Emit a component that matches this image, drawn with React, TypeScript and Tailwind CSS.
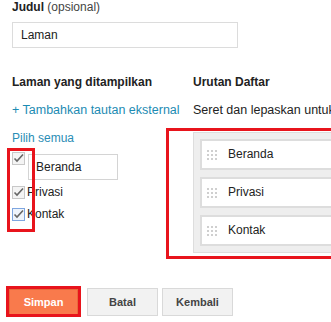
import React from "react";

function Check({ blue = false }: { blue?: boolean }) {
  return (
    <svg width="13" height="13" viewBox="0 0 13 13" className="shrink-0 block">
      <rect x="0.5" y="0.5" width="12" height="12" fill={blue ? "#eef4fc" : "#f4f4f4"} stroke={blue ? "#7ea6e0" : "#c8c8c8"} />
      <path d="M2.5 6.5 L5 9 L11 2.5" fill="none" stroke="#666" strokeWidth="1.6" />
    </svg>
  );
}

function Grip() {
  return (
    <svg width="12" height="12" viewBox="0 0 12 12" className="shrink-0 block">
      {[1, 5, 9].map((y) =>
        [1, 5, 9].map((x) => <rect key={`${x}-${y}`} x={x} y={y} width="2" height="2" fill="#cfcfcf" />)
      )}
    </svg>
  );
}

function Item({ label }: { label: string }) {
  return (
    <div className="h-[31px] border-2 border-[#dddddd] bg-white flex items-center pl-[4px]">
      <Grip />
      <span className="ml-[10px]">{label}</span>
    </div>
  );
}

export default function App() {
  return (
    <div
      className="relative w-[331px] h-[322px] overflow-hidden bg-white pl-[12px] text-[12px] leading-[15px] text-[#222]"
      style={{ fontFamily: '"Liberation Sans", Arial, sans-serif' }}
    >
      <div>
        <span className="font-bold">Judul</span> <span className="text-[#444]">(opsional)</span>
      </div>
      <div className="mt-[7px] w-[226px] h-[26px] border border-[#dcdcdc] flex items-center pl-[8px]">Laman</div>

      <div className="flex mt-[27px]">
        <div className="w-[181px] shrink-0">
          <div className="font-bold">Laman yang ditampilkan</div>
          <div className="mt-[13px] text-[12.5px] text-[#1c8bb3] whitespace-nowrap">+ Tambahkan tautan eksternal</div>
          <div className="mt-[13px] text-[#2a8db5]">Pilih semua</div>
          <div className="mt-[6px] flex items-start">
            <Check />
            <div className="ml-[3px] mt-[2px] w-[90px] h-[26px] border border-[#d4d4d4] flex items-center pl-[7px]">Beranda</div>
          </div>
          <div className="mt-[5px] h-[15px] flex items-center">
            <Check />
            <span className="ml-[2px]">Privasi</span>
          </div>
          <div className="mt-[7px] h-[15px] flex items-center">
            <Check blue />
            <span className="ml-[2px]">Kontak</span>
          </div>
        </div>
        <div className="w-[200px] shrink-0">
          <div className="font-bold">Urutan Daftar</div>
          <div className="mt-[13px] text-[12.5px] whitespace-nowrap">Seret dan lepaskan untuk mengubah urutan</div>
          <div className="mt-[14px] border border-[#dddddd] bg-[#eeeeee] p-[6px] flex flex-col gap-[7px]">
            <Item label="Beranda" />
            <Item label="Privasi" />
            <Item label="Kontak" />
          </div>
        </div>
      </div>

      <div className="mt-[35px] flex items-center font-bold text-[11px]">
        <div className="ml-[-3px] w-[69px] h-[27px] bg-[#f97a4c] border border-[#e86a3c] text-white flex items-center justify-center">Simpan</div>
        <div className="ml-[9px] w-[71px] h-[28px] bg-[#f2f2f2] border border-[#d9d9d9] text-[#444] flex items-center justify-center">Batal</div>
        <div className="ml-[4px] w-[71px] h-[28px] bg-[#f2f2f2] border border-[#d9d9d9] text-[#444] flex items-center justify-center">Kembali</div>
      </div>

      <div className="absolute left-[7px] top-[148px] w-[28px] h-[84px] border-[3px] border-[#e8141c]" />
      <div className="absolute left-[166px] top-[128px] w-[200px] h-[131px] border-[3px] border-[#e8141c]" />
      <div className="absolute left-[6px] top-[286px] w-[75px] h-[31px] border-[3px] border-[#e8141c]" />
    </div>
  );
}
